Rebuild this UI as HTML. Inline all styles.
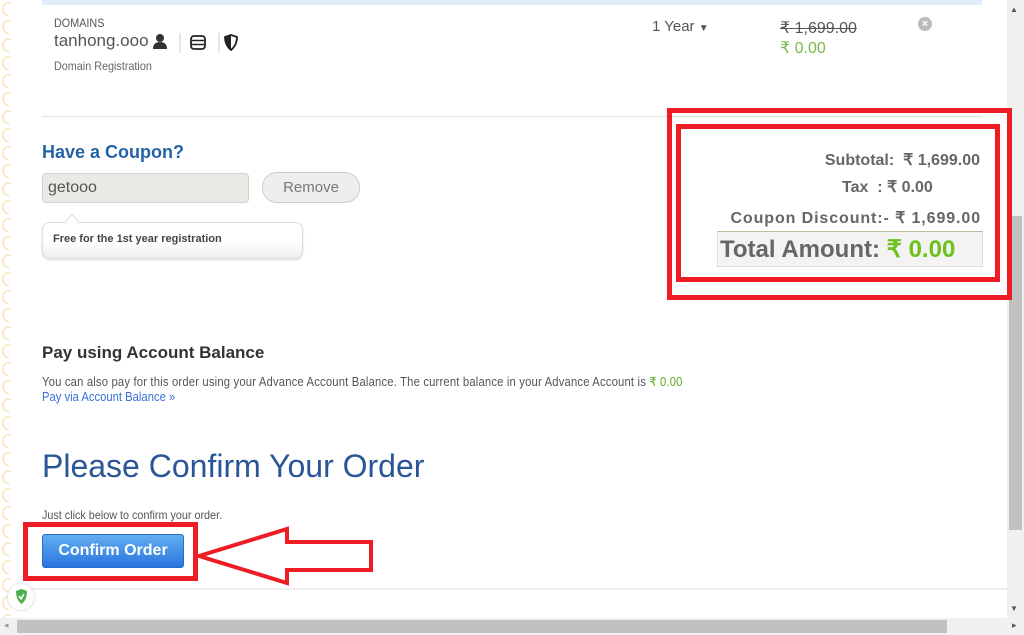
<!DOCTYPE html>
<html><head><meta charset="utf-8"><style>
*{margin:0;padding:0;box-sizing:border-box}
body{width:1024px;height:635px;overflow:hidden;background:#fff;font-family:"Liberation Sans",Arial,sans-serif;position:relative;color:#555}
.a{position:absolute;white-space:nowrap}
.n{transform-origin:0 0;transform:scaleX(.9)}
</style></head><body>
<svg class="a" style="left:0;top:0" width="14" height="618"><defs><pattern id="p" width="14" height="18" patternUnits="userSpaceOnUse"><path d="M11 3 Q3 2 3 9 Q3 15 9 16" fill="none" stroke="#f8e7b8" stroke-width="1.6"/></pattern></defs><rect width="14" height="618" fill="url(#p)"/></svg>
<div class="a" style="left:1007px;top:0;width:17px;height:618px;background:#f0f0f0"></div>
<div class="a" style="left:1010px;top:5px;font-size:8px;color:#555">▲</div>
<div class="a" style="left:1010px;top:604px;font-size:8px;color:#555">▼</div>
<div class="a" style="left:1009px;top:216px;width:13px;height:314px;background:#c1c1c1"></div>
<div class="a" style="left:0;top:618px;width:1024px;height:17px;background:#f0f0f0"></div>
<div class="a" style="left:17px;top:620px;width:930px;height:13px;background:#c1c1c1"></div>
<div class="a" style="left:4px;top:620px;font-size:9px;color:#999">◂</div>
<div class="a" style="left:1012px;top:620px;font-size:9px;color:#555">▸</div>
<div class="a" style="left:42px;top:0;width:940px;height:5px;background:#dfeefa"></div>
<div class="a n" style="left:54px;top:16px;font-size:12px;color:#555">DOMAINS</div>
<div class="a" style="left:54px;top:31px;font-size:17px;color:#555">tanhong.ooo</div>
<svg class="a" style="left:152px;top:33px" width="90" height="20"><circle cx="8" cy="5" r="4" fill="#333"/><path d="M1 16 Q1 9 8 9 Q15 9 15 16Z" fill="#333"/><line x1="28" y1="0" x2="28" y2="20" stroke="#ccc"/><rect x="39" y="3" width="14" height="13" rx="3" fill="none" stroke="#222" stroke-width="1.8"/><line x1="40" y1="7.5" x2="52" y2="7.5" stroke="#222" stroke-width="1.5"/><line x1="40" y1="11.5" x2="52" y2="11.5" stroke="#222" stroke-width="1.5"/><line x1="67" y1="0" x2="67" y2="20" stroke="#ccc"/><path d="M73 4 L79 2 L85 4 Q85 12 79 17 Q73 12 73 4Z" fill="none" stroke="#222" stroke-width="1.8"/><path d="M79 3 L79 16 Q73 12 73 4Z" fill="#222"/></svg>
<div class="a n" style="left:54px;top:59px;font-size:12px;color:#666">Domain Registration</div>
<div class="a" style="left:652px;top:18px;font-size:15px;color:#555">1 Year <span style="font-size:10px">▼</span></div>
<div class="a" style="left:780px;top:18px;font-size:16px;color:#555;text-decoration:line-through">₹ 1,699.00</div>
<div class="a" style="left:780px;top:38px;font-size:16px;color:#7bb84a">₹ 0.00</div>
<div class="a" style="left:918px;top:17px;width:14px;height:14px;border-radius:50%;background:#bbb;color:#fff;font-size:11px;font-weight:bold;text-align:center;line-height:14px">×</div>
<div class="a" style="left:42px;top:116px;width:940px;height:1px;background:#e2e2e2"></div>
<div class="a" style="left:42px;top:142px;font-size:18px;font-weight:bold;color:#2563a8">Have a Coupon?</div>
<div class="a" style="left:42px;top:173px;width:207px;height:30px;background:#ebe9e3;border:1px solid #d5d3cd;border-radius:4px;font-size:16px;padding:5px 5px;color:#555;line-height:18px">getooo</div>
<div class="a" style="left:262px;top:172px;width:98px;height:31px;background:#eee;border:1px solid #ccc;border-radius:15px;font-size:15px;color:#777;text-align:center;line-height:29px">Remove</div>
<div class="a" style="left:42px;top:222px;width:261px;height:37px;border:1px solid #ddd;border-radius:8px;background:linear-gradient(#fff 50%,#f0f0f0);box-shadow:0 1px 2px rgba(0,0,0,.15);font-size:11px;font-weight:bold;color:#444;padding:10px 10px">Free for the 1st year registration</div>
<div class="a" style="left:67px;top:216px;width:10px;height:10px;background:#fff;border-left:1px solid #ddd;border-top:1px solid #ddd;transform:rotate(45deg)"></div>
<div class="a" style="left:667px;top:108px;width:345px;height:192px;border:5px solid #ee1c25"></div>
<div class="a" style="left:676px;top:124px;width:324px;height:158px;border:5px solid #ee1c25"></div>
<div class="a" style="right:44px;top:150px;font-size:16px;font-weight:bold;color:#666">Subtotal:&nbsp; ₹ 1,699.00</div>
<div class="a" style="left:842px;top:177px;font-size:16px;font-weight:bold;color:#666">Tax &nbsp;: ₹ 0.00</div>
<div class="a" style="right:43px;top:208px;font-size:16px;font-weight:bold;color:#666;letter-spacing:.9px">Coupon Discount:- ₹ 1,699.00</div>
<div class="a" style="left:717px;top:231px;width:266px;height:36px;background:#f3f3f3;border:1px solid #ddd;border-top:1px solid #bdbd9a"></div>
<div class="a" style="left:720px;top:235px;font-size:24px;font-weight:bold;color:#666">Total Amount: <span style="color:#6cc11c">₹ 0.00</span></div>
<div class="a" style="left:42px;top:343px;font-size:17px;font-weight:bold;color:#333">Pay using Account Balance</div>
<div class="a n" style="left:42px;top:374px;font-size:12.5px;color:#555;letter-spacing:.2px">You can also pay for this order using your Advance Account Balance. The current balance in your Advance Account is <span style="color:#5aaa1a">₹ 0.00</span></div>
<div class="a n" style="left:42px;top:390px;font-size:12.5px;color:#3a6fd8">Pay via Account Balance »</div>
<div class="a" style="left:42px;top:448px;font-size:32px;color:#2a5597">Please Confirm Your Order</div>
<div class="a n" style="left:42px;top:508px;font-size:12px;color:#555">Just click below to confirm your order.</div>
<div class="a" style="left:42px;top:534px;width:142px;height:34px;border-radius:3px;background:linear-gradient(#62aef0,#2a75de);border:1px solid #2b6cc8;color:#fff;font-size:16px;font-weight:bold;text-align:center;line-height:32px">Confirm Order</div>
<div class="a" style="left:23px;top:522px;width:175px;height:59px;border:5px solid #ee1c25"></div>
<svg class="a" style="left:195px;top:525px" width="185" height="62"><path d="M4 31 L92 4 L92 17 L176 17 L176 45 L92 45 L92 58 Z" fill="#fff" stroke="#ee1c25" stroke-width="4"/></svg>
<div class="a" style="left:13px;top:588px;width:994px;height:2px;background:#eee"></div>
<div class="a" style="left:8px;top:584px;width:26px;height:26px;border-radius:50%;background:#fff;box-shadow:0 0 3px rgba(0,0,0,.2)"></div>
<svg class="a" style="left:15px;top:589px" width="13" height="16"><path d="M1 2 L6.5 0 L12 2 Q12 11 6.5 15 Q1 11 1 2Z" fill="#4cae4c"/><path d="M4 7 L6 10 L9 5" fill="none" stroke="#fff" stroke-width="1.5"/></svg>
</body></html>
